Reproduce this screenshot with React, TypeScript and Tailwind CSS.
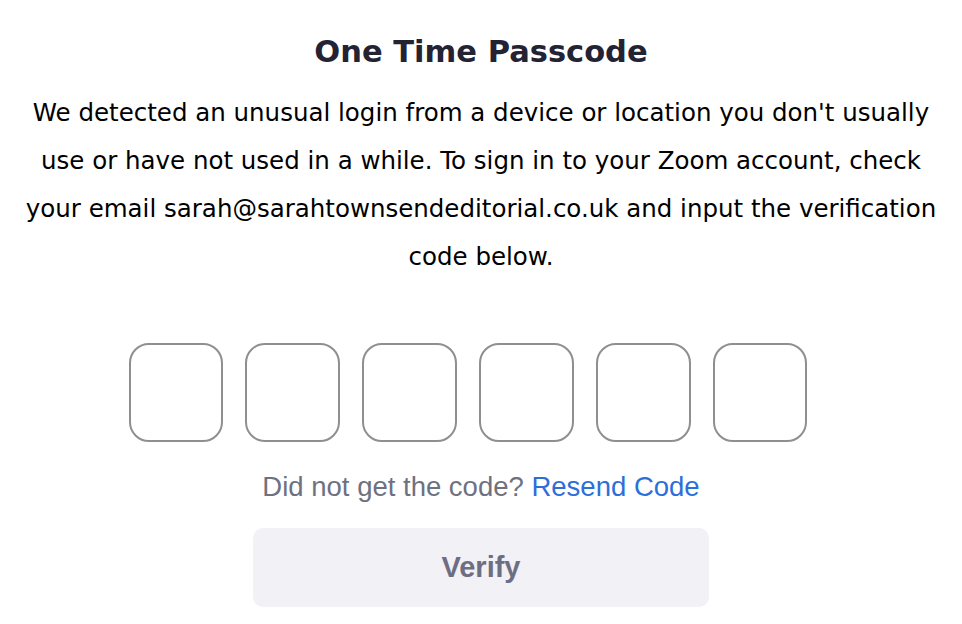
export default function App() {
  const boxes = [0, 1, 2, 3, 4, 5]

  return (
    <div className="w-[962px] h-[624px] bg-white flex flex-col items-center">
      <h1
        className="mt-[31px] text-[30.5px] leading-[42px] font-bold text-[#232333]"
        style={{ fontFamily: "'DejaVu Sans', Verdana, sans-serif" }}
      >
        One Time Passcode
      </h1>
      <p
        className="mt-[16px] text-center text-[24.5px] leading-[48px] text-black"
        style={{ fontFamily: "'DejaVu Sans', Verdana, sans-serif" }}
      >
        We detected an unusual login from a device or location you don't usually
        <br />
        use or have not used in a while. To sign in to your Zoom account, check
        <br />
        your email sarah@sarahtownsendeditorial.co.uk and input the verification
        <br />
        code below.
      </p>

      <div className="mt-[62px] mr-[26px] flex gap-[22.4px]">
        {boxes.map((i) => (
          <input
            key={i}
            type="text"
            maxLength={1}
            className="w-[94.5px] h-[99px] rounded-[20px] border-2 border-[#8f8f8f] bg-white text-center text-[32px] outline-none"
          />
        ))}
      </div>

      <div
        className="mt-[28px] text-[27.5px] leading-[34px] text-[#6e7180]"
        style={{ fontFamily: "'Liberation Sans', Arial, sans-serif" }}
      >
        Did not get the code? <a className="text-[#2d6fd9]">Resend Code</a>
      </div>

      <button
        className="mt-[24px] w-[456px] h-[79px] rounded-[10px] bg-[#f1f1f6] text-[29px] font-bold text-[#6e6e82]"
        style={{ fontFamily: "'Liberation Sans', Arial, sans-serif" }}
      >
        Verify
      </button>
    </div>
  )
}
